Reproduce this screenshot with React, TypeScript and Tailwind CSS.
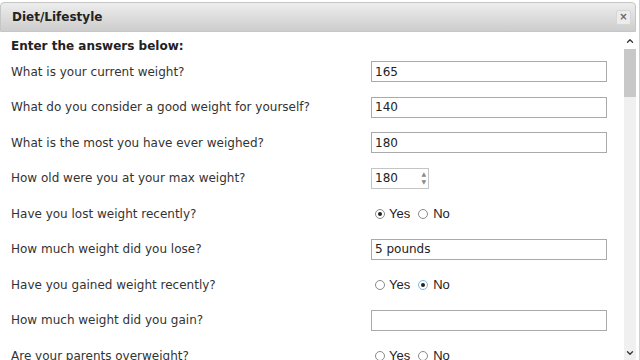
import { ChevronDown, ChevronUp } from "lucide-react";

type Row =
  | { label: string; kind: "text"; value: string }
  | { label: string; kind: "number"; value: string }
  | { label: string; kind: "radio"; value: "yes" | "no" | "" };

const rows: Row[] = [
  { label: "What is your current weight?", kind: "text", value: "165" },
  { label: "What do you consider a good weight for yourself?", kind: "text", value: "140" },
  { label: "What is the most you have ever weighed?", kind: "text", value: "180" },
  { label: "How old were you at your max weight?", kind: "number", value: "180" },
  { label: "Have you lost weight recently?", kind: "radio", value: "yes" },
  { label: "How much weight did you lose?", kind: "text", value: "5 pounds" },
  { label: "Have you gained weight recently?", kind: "radio", value: "no" },
  { label: "How much weight did you gain?", kind: "text", value: "" },
  { label: "Are your parents overweight?", kind: "radio", value: "" },
];

function Radio({ checked, focus }: { checked: boolean; focus?: boolean }) {
  return (
    <span
      className={`flex h-[10px] w-[10px] items-center justify-center rounded-full border bg-white ${
        focus ? "border-[#7ab4e8]" : "border-[#8a8a8a]"
      }`}
    >
      {checked && <span className="h-[4px] w-[4px] rounded-full bg-[#222]" />}
    </span>
  );
}

function Field({ row }: { row: Row }) {
  if (row.kind === "text") {
    return (
      <div className="flex h-[21px] w-[236px] items-center border border-[#aaa] bg-white px-[3px] text-[12px] text-[#222]">
        {row.value}
      </div>
    );
  }
  if (row.kind === "number") {
    return (
      <div className="flex h-[21px] w-[58px] items-center justify-between border border-[#c4c4c4] bg-white pl-[3px] pr-[2px] text-[12px] text-[#222]">
        <span>{row.value}</span>
        <span className="flex h-full flex-col items-center justify-center text-[6px] leading-[8px] text-[#888]">
          <span>▲</span>
          <span>▼</span>
        </span>
      </div>
    );
  }
  return (
    <div className="flex items-center pl-[4px] font-['Liberation_Sans',Arial,sans-serif] text-[13px] text-[#222]">
      <Radio checked={row.value === "yes"} />
      <span className="ml-[4px]">Yes</span>
      <span className="ml-[8px]">
        <Radio checked={row.value === "no"} focus={row.value === "no"} />
      </span>
      <span className="ml-[5px]">No</span>
    </div>
  );
}

export default function App() {
  return (
    <div className="h-[360px] w-[640px] overflow-hidden bg-white font-['DejaVu_Sans',Verdana,sans-serif]">
      <div className="flex h-full w-full flex-col border-r border-[#d0d0d0] pr-[3px] pt-[2px]">
        <header className="flex h-[30px] items-center justify-between rounded-t-[4px] border border-[#c6c6c6] bg-gradient-to-b from-[#ededed] to-[#cdcdcd] pl-[11px] pr-[4px]">
          <h1 className="text-[12px] font-bold text-[#222]">Diet/Lifestyle</h1>
          <button
            type="button"
            className="flex h-[15px] w-[15px] items-center justify-center rounded-[2px] border border-[#d6d6d6] bg-[#ececec] text-[10px] font-bold leading-none text-[#666]"
          >
            ×
          </button>
        </header>

        <div className="flex min-h-0 flex-1">
          <div className="flex-1 pl-[11px]">
            <h2 className="pt-[6px] text-[12px] font-bold leading-[16px] text-[#222]">Enter the answers below:</h2>
            {rows.map((row) => (
              <div key={row.label} className="flex h-[35.5px] items-center">
                <span className="w-[360px] text-[12px] text-[#333]">{row.label}</span>
                <Field row={row} />
              </div>
            ))}
          </div>

          <div className="flex w-[12px] flex-col bg-[#f0f0f0]">
            <div className="flex h-[17px] items-center justify-center bg-white">
              <ChevronUp className="h-[10px] w-[10px] text-[#333]" strokeWidth={3} />
            </div>
            <div className="h-[48px] bg-[#c8c8c8]" />
            <div className="flex-1" />
            <div className="flex h-[14px] items-center justify-center">
              <ChevronDown className="h-[10px] w-[10px] text-[#333]" strokeWidth={3} />
            </div>
          </div>
        </div>
      </div>
    </div>
  );
}
